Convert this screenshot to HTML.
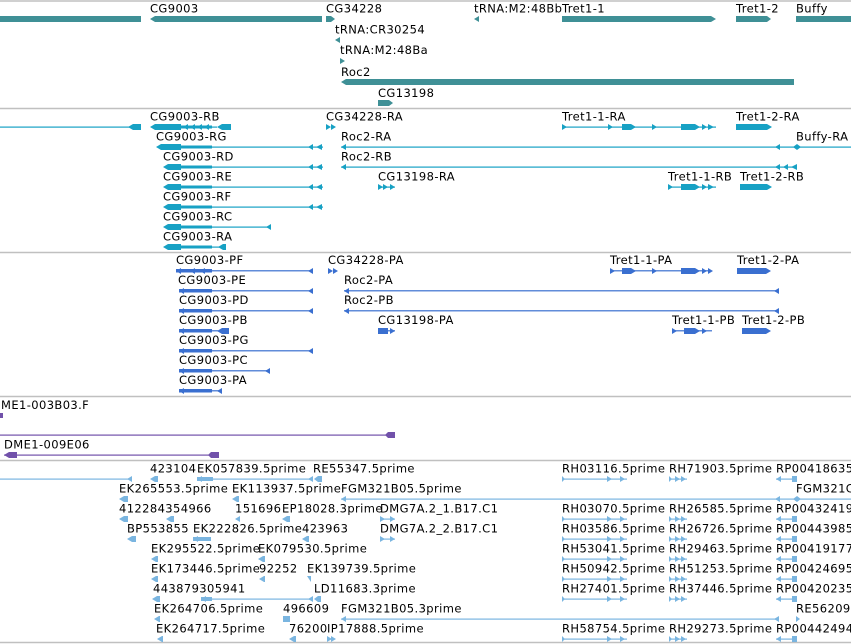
<!DOCTYPE html>
<html><head><meta charset="utf-8"><style>
html,body{margin:0;padding:0;background:#fff;width:851px;height:644px;overflow:hidden}
svg{display:block}
text{font-family:"DejaVu Sans","Liberation Sans",sans-serif;font-size:11.5px;letter-spacing:0.4px;fill:#000}
</style></head><body>
<svg width="851" height="644" xmlns="http://www.w3.org/2000/svg">
<g stroke="#c0c0c0" stroke-width="1.5">
<line x1="0" y1="1" x2="851" y2="1"/><line x1="0" y1="108.5" x2="851" y2="108.5"/>
<line x1="0" y1="252.5" x2="851" y2="252.5"/><line x1="0" y1="396.5" x2="851" y2="396.5"/>
<line x1="0" y1="460.5" x2="851" y2="460.5"/><line x1="0" y1="642.5" x2="851" y2="642.5"/>
</g>
<!-- genes -->
<g fill="#3f9096">
<rect x="0" y="16" width="141" height="6"/>
<polygon points="150,19 155,16 322,16 322,22 155,22"/>
<polygon points="326,16 331,16 335,19 331,22 326,22"/>
<polygon points="474,19 479,16 479,22"/>
<polygon points="562,16 711,16 716,19 711,22 562,22"/>
<polygon points="736,16 767,16 771,19 767,22 736,22"/>
<rect x="796" y="16" width="55" height="6"/>
<polygon points="335,40 340,37 340,43"/>
<polygon points="340,58 345,61 340,64"/>
<polygon points="341,82 346,79 794,79 794,85 346,85"/>
<polygon points="378,100 389,100 393,103 389,106 378,106"/>
</g>
<text x="150" y="12.5">CG9003</text><text x="326" y="12.5">CG34228</text><text x="474" y="12.5">tRNA:M2:48Bb</text>
<text x="562" y="12.5">Tret1-1</text><text x="736" y="12.5">Tret1-2</text><text x="796" y="12.5">Buffy</text>
<text x="335" y="33.5">tRNA:CR30254</text><text x="340" y="54">tRNA:M2:48Ba</text><text x="341" y="76">Roc2</text><text x="378" y="97">CG13198</text>
<!-- transcripts -->
<g fill="#17a1c4">
<rect x="0" y="126.5" width="130" height="1.2"/>
<polygon points="128,127 133,124 141,124 141,130 133,130"/>
<polygon points="150,127 155,124 181,124 181,130 155,130"/><rect x="181" y="125.5" width="31" height="3"/>
<polygon points="183,127 188,124 188,130"/><polygon points="190,127 195,124 195,130"/><polygon points="197,127 202,124 202,130"/><polygon points="204,127 209,124 209,130"/>
<rect x="212" y="126.5" width="5" height="1.2"/><polygon points="217,127 222,124 231,124 231,130 222,130"/>
<polygon points="326,124 331,127 326,130"/><polygon points="331,124 336,127 331,130"/>
<rect x="562" y="126.5" width="154" height="1.2"/>
<polygon points="562,124 567,127 562,130"/><polygon points="608,124 613,127 608,130"/>
<polygon points="622,124 631,124 636,127 631,130 622,130"/><polygon points="652,124 657,127 652,130"/>
<polygon points="681,124 695,124 700,127 695,130 681,130"/><polygon points="702,124 707,127 702,130"/><polygon points="708,124 714,127 708,130"/>
<polygon points="736,124 767,124 772,127 767,130 736,130"/>
<polygon points="156,147 161,144 181,144 181,150 161,150"/><rect x="181" y="145.5" width="31" height="3"/><rect x="212" y="146.5" width="111" height="1.2"/>
<polygon points="308,147 313,144 313,150"/><polygon points="316,147 322,144 322,150"/>
<rect x="341" y="146.5" width="510" height="1.2"/><polygon points="341,147 346,144 346,150"/><polygon points="775,147 780,144 780,150"/>
<polygon points="793,147 797,144 801,147 797,150"/>
<g id="rd">
<polygon points="163,167 168,164 181,164 181,170 168,170"/><rect x="181" y="165.5" width="31" height="3"/><rect x="212" y="166.5" width="111" height="1.2"/>
<polygon points="308,167 313,164 313,170"/><polygon points="316,167 322,164 322,170"/>
</g>
<rect x="341" y="166.5" width="456" height="1.2"/><polygon points="341,167 346,164 346,170"/>
<polygon points="775,167 780,164 780,170"/><polygon points="783,167 788,164 788,170"/><polygon points="791,167 797,164 797,170"/>
<use href="#rd" y="20"/><use href="#rd" y="40"/>
<polygon points="163,227 168,224 181,224 181,230 168,230"/><rect x="181" y="225.5" width="31" height="3"/><rect x="212" y="226.5" width="58" height="1.2"/><polygon points="266,227 271,224 271,230"/>
<polygon points="163,247 168,244 181,244 181,250 168,250"/><rect x="181" y="245.5" width="31" height="3"/><rect x="212" y="246.5" width="8" height="1.2"/><polygon points="218,247 223,244 226,244 226,250 223,250"/>
<polygon points="378,184 383,187 378,190"/><polygon points="383,184 388,187 383,190"/><rect x="378" y="186.5" width="17" height="1.2"/><polygon points="390,184 395,187 390,190"/>
<rect x="668" y="186.5" width="48" height="1.2"/><polygon points="668,184 673,187 668,190"/><polygon points="681,184 695,184 700,187 695,190 681,190"/><polygon points="702,184 707,187 702,190"/><polygon points="708,184 714,187 708,190"/>
<polygon points="740,184 767,184 772,187 767,190 740,190"/>
</g>
<g>
<text x="150" y="120.5">CG9003-RB</text><text x="326" y="120.5">CG34228-RA</text><text x="562" y="120.5">Tret1-1-RA</text><text x="736" y="120.5">Tret1-2-RA</text>
<text x="156" y="140.5">CG9003-RG</text><text x="341" y="140.5">Roc2-RA</text><text x="796" y="140.5">Buffy-RA</text>
<text x="163" y="160.5">CG9003-RD</text><text x="341" y="160.5">Roc2-RB</text>
<text x="163" y="180.5">CG9003-RE</text><text x="378" y="180.5">CG13198-RA</text><text x="668" y="180.5">Tret1-1-RB</text><text x="740" y="180.5">Tret1-2-RB</text>
<text x="163" y="200.5">CG9003-RF</text><text x="163" y="220.5">CG9003-RC</text><text x="163" y="240.5">CG9003-RA</text>
</g>
<!-- proteins -->
<g fill="#3a6fd0">
<rect x="176" y="269" width="36" height="3.5"/><polygon points="176,271 181,268 181,274"/><polygon points="190,271 195,268 195,274"/><polygon points="200,271 205,268 205,274"/>
<rect x="212" y="270.2" width="101" height="1.2"/><polygon points="308,271 313,268 313,274"/>
<polygon points="328,268 333,271 328,274"/><polygon points="333,268 338,271 333,274"/>
<rect x="610" y="270.2" width="100" height="1.2"/><polygon points="610,268 615,271 610,274"/><polygon points="622,268 631,268 636,271 631,274 622,274"/>
<polygon points="652,268 657,271 652,274"/><polygon points="681,268 695,268 700,271 695,274 681,274"/><polygon points="702,268 707,271 702,274"/><polygon points="708,268 713,271 708,274"/>
<polygon points="737,268 766,268 771,271 766,274 737,274"/>
<rect x="179" y="289" width="33" height="3.5"/><polygon points="179,291 184,288 184,294"/><rect x="212" y="290.2" width="101" height="1.2"/><polygon points="308,291 313,288 313,294"/>
<rect x="344" y="290.2" width="435" height="1.2"/><polygon points="344,291 349,288 349,294"/><polygon points="774,291 779,288 779,294"/>
<rect x="179" y="309" width="33" height="3.5"/><polygon points="179,311 184,308 184,314"/><rect x="212" y="310.2" width="101" height="1.2"/><polygon points="308,311 313,308 313,314"/>
<rect x="344" y="310.2" width="435" height="1.2"/><polygon points="344,311 349,308 349,314"/><polygon points="774,311 779,308 779,314"/>
<rect x="179" y="329" width="33" height="3.5"/><polygon points="179,331 184,328 184,334"/><rect x="212" y="330.2" width="6" height="1.2"/><polygon points="217,331 222,328 229,328 229,334 222,334"/>
<polygon points="378,328 388,328 388,334 378,334"/><rect x="378" y="330.2" width="17" height="1.2"/><polygon points="390,328 395,331 390,334"/>
<rect x="672" y="330.2" width="40" height="1.2"/><polygon points="672,328 677,331 672,334"/><polygon points="684,328 695,328 700,331 695,334 684,334"/><polygon points="702,328 707,331 702,334"/>
<polygon points="742,328 766,328 771,331 766,334 742,334"/>
<rect x="179" y="349" width="33" height="3.5"/><polygon points="179,351 184,348 184,354"/><rect x="212" y="350.2" width="101" height="1.2"/><polygon points="308,351 313,348 313,354"/>
<rect x="179" y="369" width="33" height="3.5"/><polygon points="179,371 184,368 184,374"/><rect x="212" y="370.2" width="58" height="1.2"/><polygon points="265,371 270,368 270,374"/>
<rect x="179" y="389" width="33" height="3.5"/><polygon points="179,391 184,388 184,394"/><rect x="212" y="390.2" width="10" height="1.2"/><polygon points="217,391 222,388 222,394"/>
</g>
<text x="176" y="264">CG9003-PF</text><text x="328" y="264">CG34228-PA</text><text x="610" y="264">Tret1-1-PA</text><text x="737" y="264">Tret1-2-PA</text>
<text x="178" y="284">CG9003-PE</text><text x="344" y="284">Roc2-PA</text>
<text x="179" y="304">CG9003-PD</text><text x="344" y="304">Roc2-PB</text>
<text x="179" y="324">CG9003-PB</text><text x="378" y="324">CG13198-PA</text><text x="672" y="324">Tret1-1-PB</text><text x="742" y="324">Tret1-2-PB</text>
<text x="179" y="344">CG9003-PG</text><text x="179" y="364">CG9003-PC</text><text x="179" y="384">CG9003-PA</text>
<!-- clones -->
<g fill="#7151aa">
<rect x="0" y="413" width="3" height="5"/>
<rect x="0" y="434.5" width="390" height="1.2"/><polygon points="385,435 388,432 395,432 395,438 388,438"/>
<rect x="4" y="454.5" width="210" height="1.2"/><polygon points="4,455 9,452 17,452 17,458 9,458"/><polygon points="208,455 211,452 219,452 219,458 211,458"/>
</g>
<text x="1" y="409">ME1-003B03.F</text><text x="4" y="448.5">DME1-009E06</text>
<!-- ESTs -->
<g fill="#7ab5e0">
<rect x="0" y="478.5" width="131" height="1.2"/><polygon points="127,479 132,476 132,482"/>
<polygon points="150,479 155,476 158,476 158,482 155,482"/>
<rect x="197" y="477" width="16" height="4"/><polygon points="197,479 202,476 202,482"/><rect x="213" y="478.5" width="100" height="1.2"/><polygon points="308,479 313,476 313,482"/><polygon points="314,479 318,476 322,476 322,482 318,482"/>
<g id="rh">
<rect x="562" y="478.5" width="65" height="1.2"/><polygon points="562,476 565,479 562,482"/><polygon points="607,476 612,479 607,482"/><polygon points="620,476 625,479 620,482"/>
<rect x="669" y="478.5" width="18" height="1.2"/><polygon points="669,476 672,479 669,482"/><polygon points="675,476 680,479 675,482"/><polygon points="681,476 686,479 681,482"/>
<rect x="776" y="478.5" width="21" height="1.2"/><polygon points="776,479 781,476 781,482"/><polygon points="792,476 797,476 797,482 792,482"/>
</g>
<use href="#rh" y="40"/><use href="#rh" y="60"/><use href="#rh" y="80"/><use href="#rh" y="100"/><use href="#rh" y="120"/><use href="#rh" y="160"/>
<polygon points="119,499 124,496 128,496 128,502 124,502"/><polygon points="232,499 237,496 239,496 239,502 237,502"/>
<rect x="341" y="498.5" width="510" height="1.2"/><polygon points="341,499 346,496 346,502"/><polygon points="775,499 780,496 780,502"/><polygon points="793,499 797,496 801,499 797,502"/>
<polygon points="119,519 124,516 128,516 128,522 124,522"/><polygon points="166,519 171,516 174,516 174,522 171,522"/>
<polygon points="235,519 240,516 240,522"/><polygon points="282,519 287,516 290,516 290,522 287,522"/>
<rect x="380" y="518.5" width="15" height="1.2"/><polygon points="380,516 385,519 380,522"/><polygon points="390,516 395,519 390,522"/>
<polygon points="127,539 132,536 136,536 136,542 132,542"/><rect x="193" y="537" width="18" height="4"/><polygon points="193,539 198,536 198,542"/><polygon points="302,539 307,536 309,536 309,542 307,542"/>
<rect x="380" y="538.5" width="15" height="1.2"/><polygon points="380,536 385,539 380,542"/><polygon points="390,536 395,539 390,542"/>
<polygon points="151,559 156,556 158,556 158,562 156,562"/><polygon points="258,559 263,556 265,556 265,562 263,562"/>
<polygon points="151,579 156,576 158,576 158,582 156,582"/><polygon points="259,579 264,576 265,576 265,582 264,582"/><polygon points="307,576 311,576 311,582"/>
<polygon points="152,599 157,596 160,596 160,602 157,602"/><rect x="201" y="597" width="11" height="4"/><polygon points="201,599 206,596 206,602"/><rect x="212" y="598.5" width="100" height="1.2"/><polygon points="308,599 313,596 313,602"/><polygon points="314,599 318,596 321,596 321,602 318,602"/>
<polygon points="154,619 159,616 160,616 160,622 159,622"/><polygon points="283,616 290,616 290,622 283,622"/>
<rect x="341" y="618.5" width="438" height="1.2"/><polygon points="341,619 346,616 346,622"/><polygon points="774,619 779,616 779,622"/><polygon points="796,616 800,619 796,622"/>
<polygon points="157,639 162,636 163,636 163,642 162,642"/><polygon points="289,639 294,636 296,636 296,642 294,642"/><polygon points="327,636 332,639 327,642"/><polygon points="331,636 336,639 331,642"/>
</g>
<g>
<text x="150" y="472.7">423104</text><text x="197" y="472.7">EK057839.5prime</text><text x="313" y="472.7">RE55347.5prime</text>
<text x="562" y="472.7">RH03116.5prime</text><text x="669" y="472.7">RH71903.5prime</text><text x="776" y="472.7">RP00418635</text>
<text x="119" y="492.7">EK265553.5prime</text><text x="232" y="492.7">EK113937.5prime</text><text x="341" y="492.7">FGM321B05.5prime</text><text x="796" y="492.7">FGM321C</text>
<text x="119" y="512.7">412284354966</text><text x="235" y="512.7">151696</text><text x="282" y="512.7">EP18028.3prime</text><text x="380" y="512.7">DMG7A.2_1.B17.C1</text>
<text x="562" y="512.7">RH03070.5prime</text><text x="669" y="512.7">RH26585.5prime</text><text x="776" y="512.7">RP00432419</text>
<text x="127" y="532.7">BP553855</text><text x="193" y="532.7">EK222826.5prime</text><text x="302" y="532.7">423963</text><text x="380" y="532.7">DMG7A.2_2.B17.C1</text>
<text x="562" y="532.7">RH03586.5prime</text><text x="669" y="532.7">RH26726.5prime</text><text x="776" y="532.7">RP00443985</text>
<text x="151" y="552.7">EK295522.5prime</text><text x="258" y="552.7">EK079530.5prime</text>
<text x="562" y="552.7">RH53041.5prime</text><text x="669" y="552.7">RH29463.5prime</text><text x="776" y="552.7">RP00419177</text>
<text x="151" y="572.7">EK173446.5prime</text><text x="259" y="572.7">92252</text><text x="307" y="572.7">EK139739.5prime</text>
<text x="562" y="572.7">RH50942.5prime</text><text x="669" y="572.7">RH51253.5prime</text><text x="776" y="572.7">RP00424695</text>
<text x="153" y="592.7">443879305941</text><text x="314" y="592.7">LD11683.3prime</text>
<text x="562" y="592.7">RH27401.5prime</text><text x="669" y="592.7">RH37446.5prime</text><text x="776" y="592.7">RP00420235</text>
<text x="154" y="612.7">EK264706.5prime</text><text x="283" y="612.7">496609</text><text x="341" y="612.7">FGM321B05.3prime</text><text x="796" y="612.7">RE56209</text>
<text x="156" y="632.7">EK264717.5prime</text><text x="289" y="632.7">76200</text><text x="327" y="632.7">IP17888.5prime</text>
<text x="562" y="632.7">RH58754.5prime</text><text x="669" y="632.7">RH29273.5prime</text><text x="776" y="632.7">RP00442494</text>
</g>
</svg>
</body></html>
